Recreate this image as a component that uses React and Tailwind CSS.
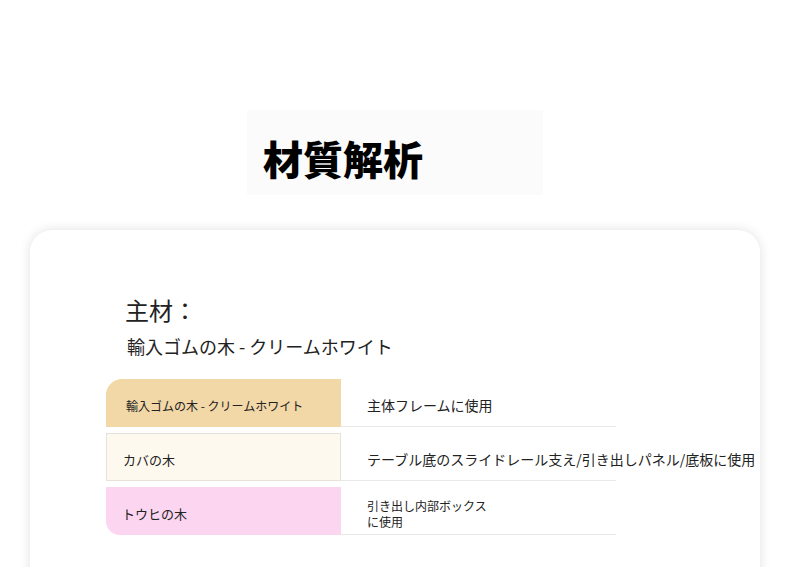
import React from "react";

const rows = [
  {
    left: "輸入ゴムの木 - クリームホワイト",
    leftCls: "bg-[#f2d7a7] rounded-tl-[16px] text-[12px] pl-[20px]",
    right: <span className="text-[14px]">主体フレームに使用</span>,
  },
  {
    left: "カバの木",
    leftCls: "bg-[#fdf9ee] border border-[#e6e2da] text-[13px] pl-[16px]",
    right: (
      <span className="text-[14px] whitespace-nowrap">
        テーブル底のスライドレール支え/引き出しパネル/底板に使用
      </span>
    ),
  },
  {
    left: "トウヒの木",
    leftCls: "bg-[#fcd6f0] rounded-bl-[14px] text-[13px] pl-[16px]",
    right: (
      <span className="text-[12px] leading-[16px]">
        引き出し内部ボックス
        <br />
        に使用
      </span>
    ),
  },
];

export default function App() {
  return (
    <div
      className="w-full h-[567px] overflow-hidden bg-white text-[#222]"
      style={{ fontFamily: '"Noto Sans CJK JP", "Noto Sans", sans-serif' }}
    >
      <div className="flex justify-center pt-[110px]">
        <div className="w-[296px] h-[85px] bg-[#fbfbfb] pl-[16px] flex items-center">
          <h1 className="text-[40px] font-black leading-none text-black pt-[10px]">
            材質解析
          </h1>
        </div>
      </div>
      <div className="mx-auto mt-[35px] w-[730px] h-[420px] rounded-[22px] bg-white shadow-[0_0_12px_rgba(0,0,0,0.12)] pt-[62px] pl-[76px]">
        <div className="pl-[19px]">
          <div className="text-[24px] leading-[36px]">主材：</div>
          <div className="text-[18px] leading-[28px] mt-[4px] pl-[2px]">
            輸入ゴムの木 - クリームホワイト
          </div>
        </div>
        <div className="mt-[19px] flex flex-col gap-[6px]">
          {rows.map((r, i) => (
            <div key={i} className="flex">
              <div
                className={`w-[235px] h-[48px] flex items-center pt-[5px] ${r.leftCls}`}
              >
                {r.left}
              </div>
              <div className="w-[275px] h-[48px] border-b border-[#e8e8e8] flex items-center pl-[26px] pt-[6px]">
                {r.right}
              </div>
            </div>
          ))}
        </div>
      </div>
    </div>
  );
}
